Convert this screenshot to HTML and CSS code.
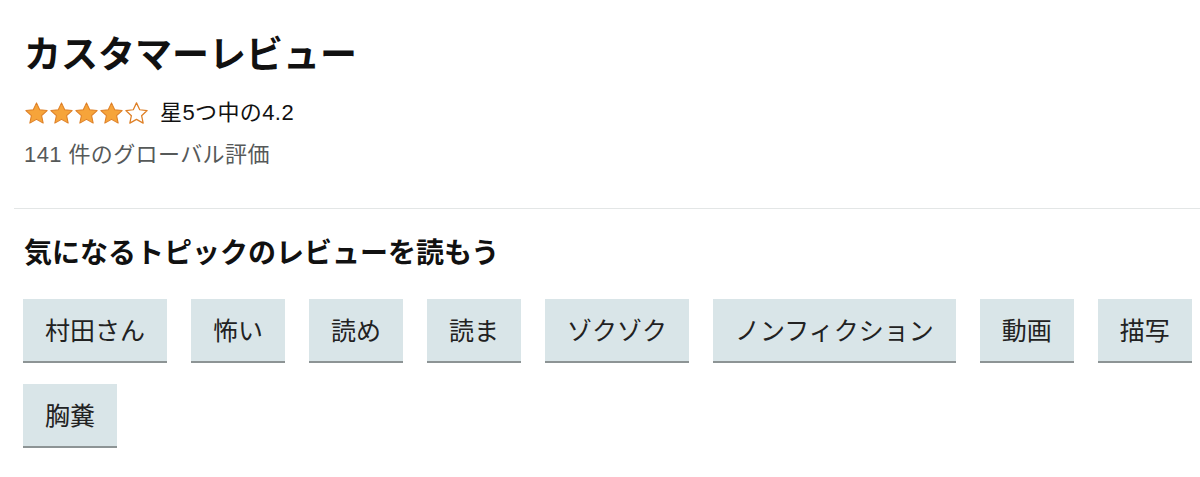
FILE: index.html
```html
<!DOCTYPE html>
<html lang="ja">
<head>
  <meta charset="utf-8">
  <title>カスタマーレビュー</title>
  <meta name="viewport" content="width=device-width, initial-scale=1.0">
  <link rel="stylesheet" href="styles.css">
</head>
<body>
<div class="reviews">
  <div class="summary">
    <h2 class="titulo">カスタマーレビュー</h2>
    <div class="rating-row">
      <span class="stars">
        <svg class="star" viewBox="0 0 24 24"><path class="full" d="M12 1.8l3.1 6.6 7.1.8-5.3 4.9 1.5 7.1L12 17.6l-6.4 3.6 1.5-7.1-5.3-4.9 7.1-.8z"/></svg>
        <svg class="star" viewBox="0 0 24 24"><path class="full" d="M12 1.8l3.1 6.6 7.1.8-5.3 4.9 1.5 7.1L12 17.6l-6.4 3.6 1.5-7.1-5.3-4.9 7.1-.8z"/></svg>
        <svg class="star" viewBox="0 0 24 24"><path class="full" d="M12 1.8l3.1 6.6 7.1.8-5.3 4.9 1.5 7.1L12 17.6l-6.4 3.6 1.5-7.1-5.3-4.9 7.1-.8z"/></svg>
        <svg class="star" viewBox="0 0 24 24"><path class="full" d="M12 1.8l3.1 6.6 7.1.8-5.3 4.9 1.5 7.1L12 17.6l-6.4 3.6 1.5-7.1-5.3-4.9 7.1-.8z"/></svg>
        <svg class="star" viewBox="0 0 24 24"><path class="empty" d="M12 1.8l3.1 6.6 7.1.8-5.3 4.9 1.5 7.1L12 17.6l-6.4 3.6 1.5-7.1-5.3-4.9 7.1-.8z"/></svg>
      </span>
      <span class="rating-text">星5つ中の4.2</span>
    </div>
    <div class="rating-count">141 件のグローバル評価</div>
  </div>

  <hr class="divider">

  <div class="topics">
    <h3 class="topics-title">気になるトピックのレビューを読もう</h3>
    <div class="chip-list">
      <button class="chip">村田さん</button>
      <button class="chip">怖い</button>
      <button class="chip">読め</button>
      <button class="chip">読ま</button>
      <button class="chip">ゾクゾク</button>
      <button class="chip">ノンフィクション</button>
      <button class="chip">動画</button>
      <button class="chip">描写</button>
      <button class="chip">胸糞</button>
    </div>
  </div>
</div>
</body>
</html>
```

FILE: styles.css
```css
body {
  margin: 0;
  font-family: "Noto Sans CJK JP", "Noto Sans", sans-serif;
  color: #111;
  background-color: white;
}

.summary {
  padding: 30px 24px 0 24px;
}

.titulo {
  margin: 0;
  font-size: 37px;
  line-height: 44px;
  font-weight: bold;
}

.rating-row {
  display: flex;
  align-items: center;
  margin-top: 24px;
  height: 30px;
}

.stars {
  display: flex;
  margin-right: 11px;
}

.star {
  width: 25px;
  height: 25px;
}

.star .full {
  fill: #f6a43a;
  stroke: #de7f25;
  stroke-width: 1;
  stroke-linejoin: round;
}

.star .empty {
  fill: white;
  stroke: #de7f25;
  stroke-width: 1.2;
  stroke-linejoin: round;
}

/* numeros con ancho tipo Arial */
.rating-text,
.rating-count {
  font-family: "Liberation Sans", "Noto Sans CJK JP", sans-serif;
  font-size: 22px;
  letter-spacing: 0.4px;
  line-height: 30px;
}

.rating-count {
  margin-top: 12px;
  color: #565959;
}

.divider {
  margin: 38px 0 0 14px;
  border: none;
  border-top: 1px solid #e3e6e6;
  height: 0;
}

.topics {
  padding: 24px 0 0 23px;
}

.topics-title {
  margin: 0 0 0 1px;
  font-size: 28px;
  line-height: 36px;
  font-weight: bold;
}

.chip-list {
  display: flex;
  flex-wrap: wrap;
  gap: 21px 24px;
  margin-top: 30px;
}

.chip {
  font-family: "Noto Sans CJK JP", "Noto Sans", sans-serif;
  font-size: 25px;
  line-height: 35px;
  color: #222;
  padding: 13px 22px 14px 22px;
  border: none;
  border-bottom: 2px solid #8d9495;
  border-radius: 0;
  background-color: #d9e5e8;
}
```
